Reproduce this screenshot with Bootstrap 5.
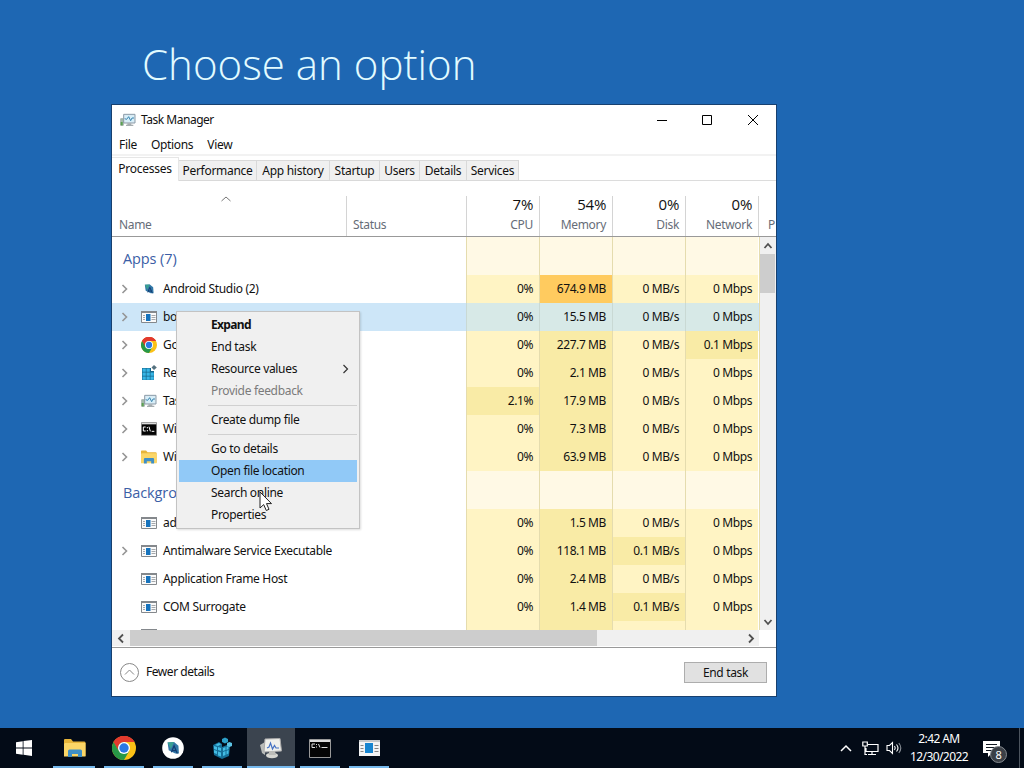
<!DOCTYPE html>
<html lang="en">
<head>
<meta charset="utf-8">
<title>Task Manager</title>
<link href="https://cdn.jsdelivr.net/npm/bootstrap@5.3.0/dist/css/bootstrap.min.css" rel="stylesheet">
<style>
html,body{height:100%}
body{background:#1e67b3;font:12px/16px "Noto Sans","Open Sans",sans-serif;letter-spacing:-.32px;color:#111;overflow:hidden}
svg{display:block;flex:none}
.headline{font:300 42px/50px "Open Sans","Noto Sans",sans-serif;letter-spacing:.02px;color:#e2fbff;height:104px;padding:39px 0 0 142px;white-space:nowrap}
.win{width:666px;height:593px;margin-left:111px;background:#fff;border:1px solid #17406f}
.titlebar{height:30px;padding:0 17px 0 8px}
.titlebar span{margin-left:5px;letter-spacing:-.48px}
.menus{height:18px;padding-left:7px;gap:14px;margin-top:1px}
.tabs{height:28px;border-top:2px solid #f2f2f2}
.tabs:after{content:"";display:block;flex:1;border-bottom:1px solid #dcdcdc;height:25px}
.tab-item{height:21px;margin-top:4px;background:#f0f0f0;border:1px solid #d9d9d9;border-left-width:0;text-align:center;white-space:nowrap;line-height:20px;letter-spacing:-.28px}
.tab-item.on{background:#fff;margin-top:1px;height:24px;border-bottom:0;border-color:#e6e6e6;line-height:22px}
.heads{height:55px;border-bottom:1px solid #999;color:#666d78}
.heads>div{margin-top:14px;height:41px;border-left:1px solid #d4d4d4;padding-right:6px;text-align:right;padding-top:21px;white-space:nowrap}
.heads>.c-num{padding-top:0}
.heads>:first-child{border:0;padding-left:7px}
.heads .pct{font-size:15px;line-height:17px;height:21px;color:#111;letter-spacing:-.3px;font-family:"Open Sans","Noto Sans",sans-serif}
.c-name{width:234px;flex:none}.c-stat{width:120px;flex:none}.c-num{width:73px;flex:none}
.listing{height:393px;overflow:hidden}
.proc{height:28px}.grp{height:38px}
.proc .c-name{width:354px;padding-left:8px;gap:0}
.proc .c-name svg:first-child,.proc .blank{width:9px;margin-right:12px}
.proc .c-name span{margin-left:6px}
.proc .c-num{height:100%;border-left:1px solid #e5dcae;background:#fff4c4;text-align:right;padding-right:6px;line-height:28px;white-space:nowrap;letter-spacing:-.4px}
.proc .h1c{background:#f9eba6}.proc .h2c{background:#ffcb5f}
.grp .c-name{color:#3b5ea6;font-size:14.5px;padding-left:11px;letter-spacing:-.1px;font-family:"Open Sans","Noto Sans",sans-serif}
.grp .c-num{background:#fff9e5}
.picked{background:#cde6f8}
.picked .c-num,.picked .h1c{background:#d7e9e7;border-color:#c9d9d4}
.vbar{width:17px;background:#f0f0f0;border-left:1px solid #e5dcae}
.vbar .thumb{height:39px;width:15px;background:#cdcdcd}
.hbar{height:16px;width:647px;background:#f0f0f0}
.hbar .thumb{width:467px;height:16px;background:#cdcdcd}
.foot{height:49px;border-top:1px solid #999;padding:0 9px 0 8px}
.foot .btn-end{width:83px;height:21px;background:#e1e1e1;border:1px solid #adadad;text-align:center;line-height:19px;color:#111}
.ctx{position:absolute;left:176px;top:311px;width:184px;height:218px;background:#f0f0f0;border:1px solid #c3c3c3;padding:2px;box-shadow:1px 1px 2px #0002}
.ctx>div{height:22px;line-height:21px;padding-left:32px;white-space:nowrap}
.ctx>.fw-bold{letter-spacing:-.65px}
.ctx>hr{margin:3px 0 3px 29px;border:0;border-top:1px solid #d0d0d0;opacity:1}
.ctx .hot{background:#91c9f7}
.cursor-arrow{position:absolute;left:259px;top:491px}
.taskbar{height:40px;background:#030b17;color:#fff}
.tb{width:49px;height:40px;padding:0 5px 0 4px;position:relative;flex:none}
.tb:after{content:"";position:absolute;left:4px;right:5px;bottom:0;height:2px;background:#76b9ed}
.tb.start:after{display:none}
.tb.live{background:linear-gradient(90deg,#3b444f 48px,transparent 48px)}
.tb.live:after{left:0;right:1px}
.clock{width:74px;line-height:18px;text-align:center;font-size:12px;letter-spacing:-.6px}
.num-badge{position:absolute;left:7px;top:6px;width:17px;height:17px;border-radius:50%;background:#3b4047;border:1px solid #858a90;font-size:11px;line-height:15px;text-align:center}
</style>
</head>
<body class="d-flex flex-column">
<svg width="0" height="0" class="position-absolute">
 <symbol id="chev" viewBox="0 0 9 16"><path d="M2.500 4l4 4-4 4" fill="none" stroke="#959595" stroke-width="1.6"/></symbol>
 <symbol id="app" viewBox="0 0 16 16"><path d="M.5 2.500h15v11H.5z" fill="#fafafa" stroke="#84888c"/><path d="M0 2h16v2H0z" fill="#84888c"/><path d="M5 5h4.500v7H5z" fill="#1673bd"/><path d="M2 6.500h2M2 8.500h2M2 10.500h2M10.500 6.500h4M10.500 8.500h4M10.500 10.500h4" stroke="#a4a8ac"/></symbol>
 <symbol id="chrome" viewBox="0 0 24 24"><circle cx="12" cy="12" r="12" fill="#fbc116"/><path d="M1.600 6A12 12 0 0 0 12 24L17.200 15 12 12 6.800 15z" fill="#279847"/><path d="M1.600 6L6.800 15 12 12 12 6z" fill="#279847"/><path d="M1.600 6A12 12 0 0 1 22.400 6H12a6 6 0 0 0-5.500 4z" fill="#e23a2e"/><path d="M1.600 6L6.800 15 12 12V6L6.800 10z" fill="#279847"/><path d="M1.600 6A12 12 0 0 1 22.400 6H12a6 6 0 0 0-5.700 7.900z" fill="#e23a2e"/><circle cx="12" cy="12" r="6" fill="#fff"/><circle cx="12" cy="12" r="4.700" fill="#2b78e4"/></symbol>
 <symbol id="folder" viewBox="0 0 22 18"><path d="M0 1Q0 0 1 0h6l2 2.500h11q1.500 0 1.500 1V17H0z" fill="#e7b53a"/><path d="M1 4h20.500v13.500H0V5z" fill="#fbd667"/><path d="M4 18v-6q0-1.500 1.500-1.500h11q1.500 0 1.500 1.500v6h-4v-3H8v3z" fill="#3f8fc6"/></symbol>
 <symbol id="tm" viewBox="0 0 24 22"><path d="M1 9h4v10H1z" fill="#a5bfaa" stroke="#8d9897"/><path d="M1 14h3v5H1z" fill="#5ba052"/><path d="M5.500 2.500h17v13h-17z" fill="#dce9f2" stroke="#8a9ba8" stroke-width="1.500"/><path d="M7.500 4.500h13v9h-13z" fill="#d6f0fa"/><path d="M7 9l3 1 3-4 3 6 2-4h3" fill="none" stroke="#317ca9" stroke-width="1.400"/><path d="M11 16h6v2h3v2H9v-2h2z" fill="#a6adb0"/></symbol>
 <symbol id="cmd" viewBox="0 0 24 20"><path d="M.5.5h23v19H.5z" fill="#050505" stroke="#999"/><path d="M1 1h22v2H1z" fill="#ddd"/><g fill="none" stroke="#fff" stroke-width="1.500"><path d="M7 7H3.500v6H7M9.500 7v2M9.500 11.500v2M12 6.500l2 7M16 13.500h4"/></g></symbol>
 <symbol id="cmd-big" viewBox="0 0 22 19"><path d="M.5.5h21v18H.5z" fill="#050505" stroke="#999"/><path d="M1 1h20v2H1z" fill="#ddd"/><path d="M6 5H3v3.500h3M7.500 5v1M7.500 7.500v1M9.500 5l1.500 3.500M12.500 8.500h6" fill="none" stroke="#ddd"/></symbol>
 <symbol id="reg" viewBox="0 0 16 16"><path d="M1 3h9v3h3v9H1z" fill="#17678c"/><g fill="#37b6e6"><path d="M1.500 3.500h3.300v3.300H1.500zM5.500 3.500h3.300v3.300H5.500zM1.500 7.500h3.300v3.300H1.500zM5.500 7.500h3.300v3.300H5.500zM9.500 7.500h3.300v3.300H9.500zM1.500 11.500h3.300v3.300H1.500zM5.500 11.500h3.300v3.300H5.500zM9.500 11.500h3.300v3.300H9.500z"/></g><path d="M13 0l2.800 2.500L13 5l-2.500-2.500z" fill="#55717e"/></symbol>
 <symbol id="as" viewBox="0 0 12 12"><path d="M1 1l6-.5L11 4l.5 7H8L2 8z" fill="#3278a8"/><path d="M1 1l6-.5L4 7z" fill="#3aa092"/><path d="M4.500 10L7 4l3 7M5 8.500h4" fill="none" stroke="#123d73" stroke-width="1.200"/></symbol>
</svg>

<div class="headline">Choose an option</div>

<main class="win">
 <div class="titlebar d-flex align-items-center">
  <svg width="16" height="16"><use href="#tm"/></svg><span class="me-auto">Task Manager</span>
  <svg width="102" height="12" style="margin-top:-1px"><g fill="none" stroke="#000"><path d="M0 6.500h10M45.500 1.500h9v9h-9zM91 1l10 10M101 1L91 11"/></g></svg>
 </div>
 <nav class="menus d-flex align-items-center"><span>File</span><span>Options</span><span>View</span></nav>
 <nav class="tabs d-flex">
  <div class="tab-item on" style="width:67px">Processes</div><div class="tab-item" style="width:78px">Performance</div><div class="tab-item" style="width:73px">App history</div><div class="tab-item" style="width:50px">Startup</div><div class="tab-item" style="width:40px">Users</div><div class="tab-item" style="width:47px">Details</div><div class="tab-item" style="width:52px">Services</div>
 </nav>
 <div class="heads d-flex overflow-hidden">
  <div class="c-name text-start position-relative"><svg class="position-absolute" style="left:109px;top:0" width="10" height="6"><path d="M.5 5L5 1l4.500 4" fill="none" stroke="#777"/></svg>Name</div>
  <div class="c-stat text-start" style="padding-left:6px">Status</div>
  <div class="c-num"><div class="pct">7%</div>CPU</div><div class="c-num"><div class="pct">54%</div>Memory</div><div class="c-num"><div class="pct">0%</div>Disk</div><div class="c-num"><div class="pct">0%</div>Network</div>
  <div class="text-start" style="padding-left:9px">P</div>
 </div>
 <div class="d-flex">
  <section class="listing flex-fill" id="list"></section>
  <div class="vbar d-flex flex-column">
   <svg width="16" height="17"><path d="M4.500 11L8 7l3.500 4" fill="none" stroke="#505050" stroke-width="1.800"/></svg>
   <div class="thumb mb-auto"></div>
   <svg width="16" height="17"><path d="M4.500 7L8 11l3.500-4" fill="none" stroke="#505050" stroke-width="1.800"/></svg>
  </div>
 </div>
 <div class="hbar d-flex">
  <svg width="18" height="16"><path d="M11 4.500L7 8.500l4 4" fill="none" stroke="#505050" stroke-width="1.800"/></svg>
  <div class="thumb me-auto"></div>
  <svg width="17" height="16"><path d="M7 4.500l4 4-4 4" fill="none" stroke="#505050" stroke-width="1.800"/></svg>
 </div>
 <div style="height:1px"></div>
 <footer class="foot d-flex align-items-center">
  <svg width="19" height="19"><g fill="none" stroke="#888"><circle cx="9.500" cy="9.500" r="9"/><path d="M5 11.500l4.500-4.500 4.500 4.500"/></g></svg>
  <span class="me-auto" style="margin-left:7px;letter-spacing:-.45px">Fewer details</span><div class="btn-end">End task</div>
 </footer>
</main>

<div class="ctx">
 <div class="fw-bold">Expand</div><div>End task</div>
 <div class="d-flex">Resource values<svg class="ms-auto me-2" width="7" height="10" style="margin-top:6px"><path d="M1.500 1l4 4-4 4" fill="none" stroke="#333" stroke-width="1.200"/></svg></div>
 <div style="color:#7b7b7b">Provide feedback</div><hr><div>Create dump file</div><hr><div>Go to details</div><div class="hot">Open file location</div><div>Search online</div><div>Properties</div>
</div>
<svg class="cursor-arrow" width="14" height="21"><path d="M1 1v16l3.700-3.400L7.300 19.500l2.700-1.200-2.500-5.700h5z" fill="#fff" stroke="#222"/></svg>

<footer class="taskbar d-flex align-items-center mt-auto">
 <div class="tb start d-flex align-items-center justify-content-center"><svg width="16" height="16"><path d="M0 2.200l6.700-1v6.300H0zM7.500 1.100L16 0v7.500H7.500zM0 8.500h6.700v6.300L0 13.800zM7.500 8.500H16V16l-8.500-1.200z" fill="#fff"/></svg></div>
 <div class="tb d-flex align-items-center justify-content-center" style="width:51px;padding-right:4px"><svg width="22" height="18"><use href="#folder"/></svg></div>
 <div class="tb d-flex align-items-center justify-content-center"><svg width="24" height="24"><use href="#chrome"/></svg></div>
 <div class="tb d-flex align-items-center justify-content-center"><svg width="22" height="22"><circle cx="11" cy="11" r="10.800" fill="#fff"/><use href="#as" x="4.500" y="4.500" width="13" height="13"/></svg></div>
 <div class="tb d-flex align-items-center justify-content-center"><svg width="20" height="22"><path d="M1 8l6-3 3 2v3l5-2 3 1-1 10-7 3-8-4z" fill="#166f98"/><path d="M2 9l3 1v3l-3-1zM6 10l3 1v3l-3-1zM2 13l3 1v3l-3-1zM6 14.500l3 1v4l-3-1zM11 11l2.500-1v3l-2.500 1zM14.500 10l2-1v3l-2 1zM11 15l2.500-1v4l-2.500 1zM14.500 14l2-1v3.500l-2 1zM3 8l4-2 2 1.200-3 1.800z" fill="#43bde4"/><path d="M10 2l3-1.500L16 2v3l-3 1.500L10 5z" fill="#2c9fc8"/><path d="M15 6l2.500-1L20 6v3l-2.500 1-2.500-1z" fill="#5cc4e5"/></svg></div>
 <div class="tb live d-flex align-items-center justify-content-center"><svg width="24" height="22"><path d="M1 8l5-3v13l-3-2z" fill="#b9bcb9"/><path d="M6 2l15-.5 1.500 12.500L5 15z" fill="#eff0eb" stroke="#aaa"/><path d="M8 11l2-1 1.500-4 2 6 2-3.500L17 11h3" fill="none" stroke="#4572c4" stroke-width="1.200"/><ellipse cx="13" cy="18.500" rx="6" ry="2.700" fill="#d7d7d1"/><path d="M10 14h6l1 4h-7z" fill="#bdbdb8"/></svg></div>
 <div class="tb d-flex align-items-center justify-content-center"><svg width="22" height="19"><use href="#cmd-big"/></svg></div>
 <div class="tb d-flex align-items-center justify-content-center"><svg width="21" height="16"><path d="M0 0h21v16H0z" fill="#f4f4f4"/><path d="M0 0h21v2H0z" fill="#c5c8ca"/><path d="M6 3h8v10H6z" fill="#1785d0"/><path d="M1.500 5.500h3M1.500 8.500h3M1.500 11.500h3M15.500 5.500h4M15.500 8.500h4M15.500 11.500h4" stroke="#858585"/></svg></div>
 <svg class="ms-auto" width="12" height="8"><path d="M1 7l5-5 5 5" fill="none" stroke="#fff" stroke-width="1.500"/></svg>
 <svg style="margin-left:10px" width="17" height="15"><g fill="none" stroke="#fff" stroke-width="1.200"><path d="M6 3.500h10v7H4V7M10 10.500v3M6 13.500h8M.8 1h4.500v4H.8zM3 5v8.500h2"/></g></svg>
 <svg style="margin-left:7px" width="16" height="14"><g fill="none" stroke="#fff" stroke-width="1.100"><path d="M1 4.500h2.500L6.500 1.500v11L3.500 9.500H1zM8.500 5q1.500 2 0 4M10.500 3.500q3 3.500 0 7"/><path d="M12.800 2q4 5 0 10" stroke="#8a9097"/></g></svg>
 <div class="clock">2:42 AM<br>12/30/2022</div>
 <div class="position-relative" style="margin-left:7px;width:36px;height:17px"><svg width="18" height="17"><path d="M0 1h17v12H9l-4 4v-4H0z" fill="#fff"/><path d="M3 4.500h11M3 7.500h11M3 10.500h7" stroke="#111923"/></svg><span class="num-badge">8</span></div>
 <div style="width:1px;height:40px;margin-right:4px;background:#4c545e"></div>
</footer>

<script>
// [icon, name, expandable, cpu, memory, disk, network, heat levels per column]
const rows = [
 'Apps (7)',
 ['as','Android Studio (2)',1,'0%','674.9 MB','0 MB/s','0 Mbps','0200'],
 ['app','bo',1,'0%','15.5 MB','0 MB/s','0 Mbps','0100'],
 ['chrome','Go',1,'0%','227.7 MB','0 MB/s','0.1 Mbps','0101'],
 ['reg','Re',1,'0%','2.1 MB','0 MB/s','0 Mbps','0100'],
 ['tm','Tas',1,'2.1%','17.9 MB','0 MB/s','0 Mbps','1100'],
 ['cmd','Wi',1,'0%','7.3 MB','0 MB/s','0 Mbps','0100'],
 ['folder','Wi',1,'0%','63.9 MB','0 MB/s','0 Mbps','0100'],
 'Backgro',
 ['app','ad',0,'0%','1.5 MB','0 MB/s','0 Mbps','0100'],
 ['app','Antimalware Service Executable',1,'0%','118.1 MB','0.1 MB/s','0 Mbps','0110'],
 ['app','Application Frame Host',0,'0%','2.4 MB','0 MB/s','0 Mbps','0100'],
 ['app','COM Surrogate',0,'0%','1.4 MB','0.1 MB/s','0 Mbps','0110'],
 ['app','',0,'','','','','0100']
];
document.getElementById('list').innerHTML = rows.map((r, i) => {
  if (typeof r === 'string') return `<div class="proc grp d-flex align-items-center"><div class="c-name" style="padding-top:5px">${r}</div>${'<div class="c-num"></div>'.repeat(4)}</div>`;
  const chev = r[2] ? '<svg width="9" height="16"><use href="#chev"/></svg>' : '<i class="blank"></i>';
  const s = r[0] === 'as' ? 10 : 16;
  const cells = [3,4,5,6].map(k => `<div class="c-num h${r[7][k-3]}c">${r[k]}</div>`).join('');
  return `<div class="proc d-flex align-items-center ${i === 2 ? 'picked' : ''}"><div class="c-name d-flex align-items-center">${chev}<svg width="16" height="${s}"><use href="#${r[0]}"/></svg><span>${r[1]}</span></div>${cells}</div>`;
}).join('');
</script>
<script src="https://cdn.jsdelivr.net/npm/bootstrap@5.3.0/dist/js/bootstrap.bundle.min.js"></script>
</body>
</html>
